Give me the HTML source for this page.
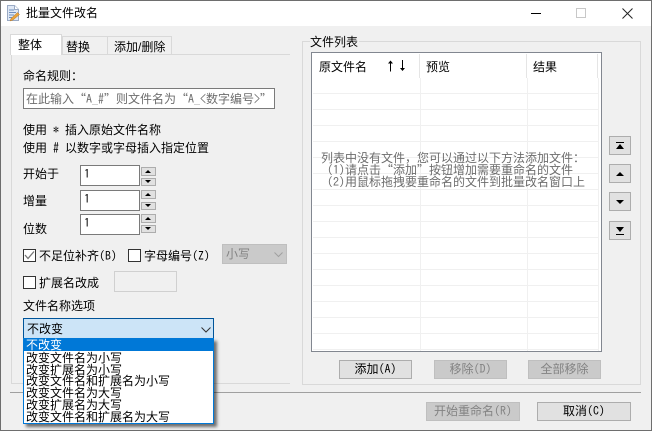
<!DOCTYPE html>
<html lang="zh"><head><meta charset="utf-8"><title>批量文件改名</title>
<style>
html,body{margin:0;padding:0;width:652px;height:431px;overflow:hidden;background:#f0f0f0}
body{position:relative;font-family:"WenQuanYi Zen Hei","Liberation Sans",sans-serif;font-size:12px;color:#000}
div,span.a{position:absolute;box-sizing:border-box}
.t{line-height:12px;height:12px;white-space:nowrap}
.l{font-family:"IPAGothic",monospace}
.q{font-family:"Noto Sans CJK SC",sans-serif;display:inline-block;width:12px;line-height:12px}
.in{background:#fff;border:1px solid #7a7a7a}
.sp{background:#e1e1e1;border:1px solid #adadad;width:15px}
.btn{background:#e1e1e1;border:1px solid #adadad;text-align:center;line-height:17px;white-space:nowrap}
.dis{background:#cacaca;border:1px solid #bfbfbf;color:#838383}
.cb{width:13px;height:13px;background:#fff;border:1px solid #333}
.up{position:absolute;left:50%;top:50%;margin:-2px 0 0 -4px;width:0;height:0;border-left:4px solid transparent;border-right:4px solid transparent;border-bottom:4px solid #000}
.dn{position:absolute;left:50%;top:50%;margin:-2px 0 0 -4px;width:0;height:0;border-left:4px solid transparent;border-right:4px solid transparent;border-top:4px solid #000}
.g{background:#f0f0f0}
.it{left:2px;line-height:12px;height:12px;white-space:nowrap}
</style></head><body>
<div style="left:0;top:0;width:652px;height:26px;background:#fff"></div>
<div style="left:0;top:0;width:652px;height:1px;background:#6e6e6e"></div>
<div style="left:0;top:0;width:1px;height:431px;background:#6e6e6e"></div>
<div style="left:651px;top:0;width:1px;height:431px;background:#6e6e6e"></div>
<div style="left:0;top:430px;width:652px;height:1px;background:#6e6e6e"></div>
<svg style="position:absolute;left:7px;top:5px" width="16" height="17" viewBox="0 0 16 17"><path d="M.5 .5H7.500L11.500 4.500V15.500H.5Z" fill="#dfe8f5" stroke="#9aaac4"/><path d="M2 5H7M2 7.500H9M2 10H7M2 12.500H5" stroke="#6f8fbd"/><path d="M7.500 .5V4.500H11.500" fill="#fff" stroke="#9aaac4"/><path d="M3 16L4 13.500L10.500 7.500L12.500 9.500L6 15Z" fill="#e8a33c" stroke="#b5772a" stroke-width=".5"/></svg>
<div class="t" style="left:26px;top:7px">批量文件改名</div>
<div style="left:531px;top:13px;width:10px;height:1px;background:#000"></div>
<div style="left:576px;top:8px;width:10px;height:10px;border:1px solid #c8c8c8"></div>
<svg style="position:absolute;left:622px;top:8px" width="11" height="11"><path d="M.5 .5L10.500 10.500M10.500 .5L.5 10.500" stroke="#222" fill="none"/></svg>

<!-- tabs -->
<div style="left:11px;top:54px;width:279px;height:330px;border:1px solid #d9d9d9;border-right:0"></div>
<div style="left:62px;top:36px;width:46px;height:19px;border:1px solid #d9d9d9;background:#f0f0f0"></div>
<div class="t" style="left:66px;top:41px">替换</div>
<div style="left:107px;top:36px;width:65px;height:19px;border:1px solid #d9d9d9;background:#f0f0f0"></div>
<div class="t" style="left:114px;top:41px">添加/删除</div>
<div style="left:10px;top:34px;width:52px;height:21px;background:#fff;border:1px solid #d9d9d9;border-bottom:0"></div>
<div class="t" style="left:18px;top:39px">整体</div>

<div class="t" style="left:23px;top:70px">命名规则&#xFF1A;</div>
<div class="in" style="left:23px;top:88px;width:252px;height:21px"></div>
<div class="t" style="left:26px;top:93px;color:#6d6d6d">在此输入<span class="q">“</span><span class="l">A_#</span><span class="q">”</span>则文件名为<span class="q">“</span><span class="l">A_&lt;</span>数字编号<span class="l">&gt;</span><span class="q">”</span></div>
<div class="t" style="left:23px;top:124px">使用<span class="l" style="white-space:pre"> * </span>插入原始文件名称</div>
<div class="t" style="left:23px;top:142px">使用<span class="l" style="white-space:pre"> # </span>以数字或字母插入指定位置</div>

<div class="t" style="left:23px;top:168px">开始于</div>
<div class="in" style="left:80px;top:165px;width:60px;height:21px"></div>
<div class="t l" style="left:84px;top:168px">1</div>
<div class="sp" style="left:141px;top:167px;height:9px"><span class="up" style="border-width:0 3.500px 3.500px;margin-left:-3.500px"></span></div>
<div class="sp" style="left:141px;top:178px;height:8px"><span class="dn" style="border-width:3.500px 3.500px 0;margin-left:-3.500px"></span></div>

<div class="t" style="left:23px;top:195px">增量</div>
<div class="in" style="left:80px;top:190px;width:60px;height:21px"></div>
<div class="t l" style="left:84px;top:193px">1</div>
<div class="sp" style="left:141px;top:190px;height:9px"><span class="up" style="border-width:0 3.500px 3.500px;margin-left:-3.500px"></span></div>
<div class="sp" style="left:141px;top:202px;height:8px"><span class="dn" style="border-width:3.500px 3.500px 0;margin-left:-3.500px"></span></div>

<div class="t" style="left:23px;top:223px">位数</div>
<div class="in" style="left:80px;top:214px;width:60px;height:21px"></div>
<div class="t l" style="left:84px;top:217px">1</div>
<div class="sp" style="left:141px;top:214px;height:9px"><span class="up" style="border-width:0 3.500px 3.500px;margin-left:-3.500px"></span></div>
<div class="sp" style="left:141px;top:225px;height:8px"><span class="dn" style="border-width:3.500px 3.500px 0;margin-left:-3.500px"></span></div>

<div class="cb" style="left:23px;top:249px"></div>
<svg style="position:absolute;left:24px;top:250px" width="11" height="11"><path d="M1 5L4 8.500L10 1.500" stroke="#777" stroke-width="1.300" fill="none"/></svg>
<div class="t" style="left:39px;top:250px">不足位补齐<span class="l">(B)</span></div>
<div class="cb" style="left:128px;top:249px"></div>
<div class="t" style="left:144px;top:250px">字母编号<span class="l">(Z)</span></div>
<div class="dis" style="left:222px;top:244px;width:65px;height:20px"></div>
<div class="t" style="left:226px;top:248px;color:#838383">小写</div>
<svg style="position:absolute;left:274px;top:252px" width="9" height="6"><path d="M.5 .5L4.500 4.500L8.500 .5" stroke="#a0a0a0" fill="none"/></svg>
<div class="cb" style="left:23px;top:276px"></div>
<div class="t" style="left:39px;top:277px">扩展名改成</div>
<div style="left:114px;top:271px;width:63px;height:21px;background:#f0f0f0;border:1px solid #d0d0d0"></div>
<div class="t" style="left:23px;top:300px">文件名称选项</div>

<!-- separator -->
<div style="left:10px;top:392px;width:631px;height:1px;background:#a0a0a0"></div>

<!-- right group -->
<div style="left:302px;top:41px;width:339px;height:344px;border:1px solid #d9d9d9"></div>
<div class="t g" style="left:310px;top:36px;padding-right:1px">文件列表</div>
<div style="left:311px;top:52px;width:291px;height:300px;background:#fff;border:1px solid #828790"></div>
<svg style="position:absolute;left:312px;top:53px" width="289" height="298">
<g stroke="#f0f0f0" fill="none">
<path d="M1 40.500H287M1 56.500H287M1 72.500H287M1 88.500H287M1 104.500H287M1 120.500H287M1 136.500H287M1 152.500H287M1 168.500H287M1 184.500H287M1 200.500H287M1 216.500H287M1 232.500H287M1 248.500H287M1 264.500H287M1 280.500H287M1 296.500H287"/>
<path d="M108.500 25V298M215.500 25V298M286.500 25V298"/>
</g>
<path d="M107.500 1V25M214.500 1V25M285.500 1V25" stroke="#e5e5e5" fill="none"/>
</svg>
<div class="t" style="left:319px;top:61px">原文件名</div>
<svg style="position:absolute;left:386px;top:60px" width="20" height="12"><path d="M4.500 3V11.500M16.500 0V8.500" stroke="#000" fill="none"/><path d="M2 3.500L4.500 .5L7 3.500ZM14 8L16.500 11L19 8Z" fill="#000"/></svg>
<div class="t" style="left:426px;top:61px">预览</div>
<div class="t" style="left:533px;top:61px">结果</div>
<div class="t" style="left:321px;top:152px;color:#6d6d6d">列表中没有文件&#xFF0C;您可以通过以下方法添加文件&#xFF1A;</div>
<div class="t" style="left:327px;top:164px;color:#6d6d6d"><span class="l">(1)</span>请点击<span class="q">“</span>添加<span class="q">”</span>按钮增加需要重命名的文件</div>
<div class="t" style="left:327px;top:176px;color:#6d6d6d"><span class="l">(2)</span>用鼠标拖拽要重命名的文件到批量改名窗口上</div>

<!-- side buttons -->
<div class="btn" style="left:609px;top:136px;width:22px;height:19px"><div style="left:6px;top:5px;width:8px;height:1px;background:#000"></div><span class="up" style="top:7px;margin-top:0;border-bottom-width:5px"></span></div>
<div class="btn" style="left:609px;top:164px;width:22px;height:19px"><span class="up"></span></div>
<div class="btn" style="left:609px;top:192px;width:22px;height:19px"><span class="dn"></span></div>
<div class="btn" style="left:609px;top:221px;width:22px;height:19px"><span class="dn" style="top:5px;margin-top:0;border-top-width:5px"></span><div style="left:6px;top:12px;width:8px;height:1px;background:#000"></div></div>

<!-- buttons -->
<div class="btn" style="left:339px;top:360px;width:73px;height:19px">添加<span class="l">(A)</span></div>
<div class="btn dis" style="left:434px;top:360px;width:73px;height:19px">移除<span class="l">(D)</span></div>
<div class="btn dis" style="left:528px;top:360px;width:73px;height:19px">全部移除</div>
<div class="btn dis" style="left:426px;top:402px;width:94px;height:19px">开始重命名<span class="l">(R)</span></div>
<div class="btn" style="left:537px;top:402px;width:94px;height:19px">取消<span class="l">(C)</span></div>

<!-- combo -->
<div style="left:23px;top:318px;width:191px;height:21px;background:#cce4f7;border:1px solid #005499"></div>
<div class="t" style="left:27px;top:323px">不改变</div>
<svg style="position:absolute;left:201px;top:327px" width="10" height="6"><path d="M.5 .5L5 5L9.500 .5" stroke="#333" fill="none"/></svg>
<div style="left:23px;top:338px;width:191px;height:86px;background:#fff;border:1px solid #0078d7;box-shadow:3px 3px 3px rgba(0,0,0,.55)">
<div style="left:0;top:0;width:189px;height:12px;background:#0078d7"></div>
<div class="it" style="color:#fff;top:0">不改变</div>
<div class="it" style="top:13px">改变文件名为小写</div>
<div class="it" style="top:25px">改变扩展名为小写</div>
<div class="it" style="top:36px">改变文件名和扩展名为小写</div>
<div class="it" style="top:48px">改变文件名为大写</div>
<div class="it" style="top:60px">改变扩展名为大写</div>
<div class="it" style="top:72px">改变文件名和扩展名为大写</div>
</div>
</body></html>
